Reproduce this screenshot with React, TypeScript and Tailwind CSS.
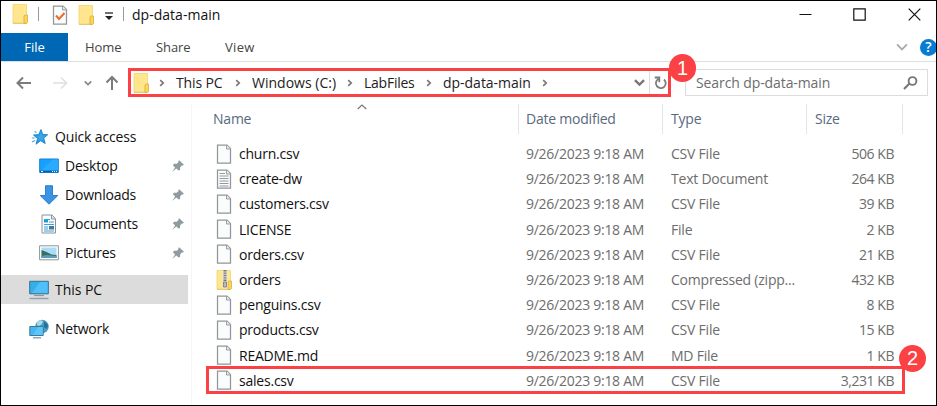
import React from "react";

function Folder({ zip = false }: { zip?: boolean }) {
  return (
    <svg width="17" height="20" viewBox="0 0 17 20" className="shrink-0">
      <path d="M1 .5h13.500v18.500H1z" fill="#ffe794" stroke="#f5d267" strokeWidth=".8" />
      <path d="M2 1.500l10 1.500v16H2z" fill="#ffe58b" />
      <path d="M13 11h2.500v7.500l-1 1H12v-7.500z" fill="#fbd65e" stroke="#d9ad38" strokeWidth=".8" />
      <path d="M1 19.300h13.500" stroke="#dbb44e" strokeWidth=".8" />
      {zip && (
        <g>
          <path d="M6.500 .500h5v18h-5z" fill="#e7e5dc" />
          <path d="M9 0v13" stroke="#777" strokeWidth="3" strokeDasharray="1.400 1" />
          <path d="M7.500 12h3v5h-3z" fill="#bbb" stroke="#777" strokeWidth=".8" />
        </g>
      )}
    </svg>
  );
}

function FileIcon({ kind = "blank" }: { kind?: string }) {
  return (
    <svg width="16" height="20" viewBox="0 0 16 20" className="shrink-0">
      <path d="M1.500 1h9.500l3.500 3.500V19h-13z" fill="#fafcfd" stroke="#929696" strokeWidth="1.250" />
      <path d="M10.500 1v4h4" fill="#e6e9ea" stroke="#929696" strokeWidth=".9" />
      {kind === "text" && <path d="M3.500 4.500H9M3.500 7h9M3.500 9.500h9M3.500 12h9M3.500 14.500h9M3.500 17h9" stroke="#939a9e" strokeWidth="1.100" />}
      {kind === "check" && <path d="M4 10.500l3 3.500L12.500 8" fill="none" stroke="#ee6b27" strokeWidth="2" />}
    </svg>
  );
}

function Chevron({ down = false, color = "#777", size = 8, weight = 1.7 }: { down?: boolean; color?: string; size?: number; weight?: number }) {
  return (
    <svg width={size} height={size} viewBox="0 0 8 8" className="shrink-0">
      <path d={down ? "M.7 2.300L4 5.600l3.300-3.300" : "M2.200 1.200L5.200 4 2.200 6.800"} fill="none" stroke={color} strokeWidth={weight} />
    </svg>
  );
}

function Pin() {
  return (
    <svg width="14" height="14" viewBox="0 0 14 14">
      <path d="M8.200 1.200L13 5.800 11.800 6.600 10.900 6.500 9.200 8.300 9 11 7.600 11.600 5.300 9.500 1.200 13 4.100 8.400 1.900 6.200 3 4.800 5.800 4.800 7.500 3.100 7.400 2z" fill="#8e9ca0" />
    </svg>
  );
}

function PlaceIcon({ name }: { name: string }) {
  switch (name) {
    case "Quick access":
      return (
        <svg width="18" height="18" viewBox="0 0 18 18">
          <path d="M10 1.500l1.700 5 5 .2-4 3.300 1.500 5.500-4.600-2.800-4.500 3.500 1.400-5.700L2.500 7l5.300-.4z" fill="#2d9be0" stroke="#1c80c6" strokeWidth=".9" />
          <path d="M9.800 4l1.200 3.500 3.500.2-3 2.300 1 3.500-3-2-2.500 1.500 1-3-2.500-2h3z" fill="#36a8ea" />
          <path d="M3.500 3.500l2 1M.8 10h3M1 14l3-1.500" stroke="#49a8dc" strokeWidth="1.200" />
        </svg>
      );
    case "Desktop":
      return (
        <svg width="20" height="16" viewBox="0 0 20 16">
          <path d="M.7 1h18.600v13.500H.7z" fill="#17a0ff" stroke="#167fcb" />
          <path d="M14 1.500h5V12H3z" fill="#2aabff" />
          <path d="M1 13.500h18" stroke="#07609f" strokeWidth="1.500" />
          <path d="M2 13.500h2M13 13.500h1M15 13.500h1M17 13.500h1" stroke="#e3f6ff" />
        </svg>
      );
    case "Downloads":
      return (
        <svg width="20" height="20" viewBox="0 0 20 20">
          <path d="M6.500.7h7v9.800h5.300L10 19.200 1.200 10.500h5.300z" fill="#3994e5" stroke="#2678c1" strokeWidth=".9" />
        </svg>
      );
    case "Documents":
      return (
        <svg width="16" height="20" viewBox="0 0 16 20">
          <path d="M1 1h10l3.500 3.500V19H1z" fill="#fcfdfd" stroke="#8b9295" />
          <path d="M10.500 1v4h4" fill="#dce4e8" stroke="#929a9e" />
          <path d="M3 5.500h6M3 8h4M8 8h5M3 10.500h10M3 13h4M3 15h4M3 17h10" stroke="#39a2df" />
          <path d="M3 6h4v2H3z" fill="#1799dd" />
          <path d="M8 12h5v3.500H8z" fill="#4a7795" />
        </svg>
      );
    case "Pictures":
      return (
        <svg width="20" height="16" viewBox="0 0 20 16">
          <path d="M.6.800h18.800v14H.6z" fill="#fff" stroke="#8f9698" />
          <path d="M2.500 2.500h15v10.500h-15z" fill="#a9dcf6" />
          <path d="M2.500 5l5 2 5 2.500 5 .5v3h-15z" fill="#376f67" />
          <path d="M2.500 11l5-1 10 1v2h-15z" fill="#5c9dbc" />
        </svg>
      );
    case "This PC":
      return (
        <svg width="20" height="20" viewBox="0 0 20 20">
          <path d="M.7 1.300h18.600v12.500H.7z" fill="#35afe9" stroke="#35708f" />
          <path d="M11 2h7.600v11H3z" fill="#50bffa" />
          <path d="M5 15.500h10" stroke="#8999a6" strokeWidth="1.200" />
          <path d="M.5 18.500h19" stroke="#8da0b1" strokeWidth="1.400" />
        </svg>
      );
    default:
      return (
        <svg width="20" height="20" viewBox="0 0 20 20">
          <circle cx="13" cy="7.500" r="6.800" fill="#4a9bbe" />
          <path d="M8 3l3-2 3 1-1 3-3 2-2-1z" fill="#a8d8e6" />
          <path d="M15 2l4 4-1 4-3-2z" fill="#286d9b" />
          <path d="M.8 7.500h13.400v9H.8z" fill="#45b7ef" stroke="#38799e" />
          <path d="M9 8h4.700v8H4z" fill="#5cc6f8" />
          <path d="M4 18.800h8" stroke="#7395a9" strokeWidth="1.200" />
        </svg>
      );
  }
}

const files = [
  ["churn.csv", "CSV File", "506 KB"],
  ["create-dw", "Text Document", "264 KB"],
  ["customers.csv", "CSV File", "39 KB"],
  ["LICENSE", "File", "2 KB"],
  ["orders.csv", "CSV File", "21 KB"],
  ["orders", "Compressed (zipp...", "432 KB"],
  ["penguins.csv", "CSV File", "8 KB"],
  ["products.csv", "CSV File", "15 KB"],
  ["README.md", "MD File", "1 KB"],
  ["sales.csv", "CSV File", "3,231 KB"],
];

function TitleBar() {
  return (
    <header className="flex h-8 items-center pr-[15px]">
      <div className="ml-[11px] flex -translate-y-[3px]"><Folder /></div>
      <div className="ml-[9px] h-[14px] w-px -translate-y-[3px] bg-[#999]" />
      <div className="ml-[13px] flex -translate-y-[2px]"><FileIcon kind="check" /></div>
      <div className="ml-[10px] flex -translate-y-[2px]"><Folder /></div>
      <svg width="10" height="9" viewBox="0 0 10 9" className="ml-[9px] -translate-y-[1px]">
        <path d="M1 1h8" stroke="#222" strokeWidth="1.300" /><path d="M1 4h8L5 8z" fill="#222" />
      </svg>
      <div className="ml-[9px] h-[14px] w-px -translate-y-[3px] bg-[#999]" />
      <span className="ml-[8px] -translate-y-[2px] tracking-[0.020px]">dp-data-main</span>
      <div className="ml-auto flex -translate-y-[3px] items-center">
        <svg width="13" height="13" viewBox="0 0 13 13"><path d="M.5 6.500h12" stroke="#111" /></svg>
        <svg width="13" height="13" viewBox="0 0 13 13" className="ml-[41px]"><path d="M.8.800h11.400v11.400H.8z" fill="none" stroke="#111" strokeWidth="1.200" /></svg>
        <svg width="13" height="13" viewBox="0 0 13 13" className="ml-[42px]"><path d="M.7.700l11.600 11.600M12.300.700L.7 12.300" stroke="#111" strokeWidth="1.200" /></svg>
      </div>
    </header>
  );
}

function AddressBar() {
  return (
    <div className="flex h-[43px] items-center border-t border-[#dedede] pb-px text-[#222]">
      <svg width="16" height="14" viewBox="0 0 16 14" className="ml-[15px]">
        <path d="M15 7H2M7 1.500L1.500 7 7 12.500" fill="none" stroke="#7b7b7b" strokeWidth="2" />
      </svg>
      <svg width="16" height="14" viewBox="0 0 16 14" className="ml-5">
        <path d="M1 7h13M9 1.500L14.500 7 9 12.500" fill="none" stroke="#dde1e1" strokeWidth="1.600" />
      </svg>
      <div className="ml-4"><Chevron down color="#888" /></div>
      <svg width="14" height="16" viewBox="0 0 14 16" className="ml-[13px]">
        <path d="M7 15V2M1.500 7.500L7 2l5.500 5.500" fill="none" stroke="#7b7b7b" strokeWidth="2" />
      </svg>
      <div className="relative ml-[9px] flex h-[29px] w-[543px] items-center border-[3px] border-[#fb4143]">
        <div className="ml-[2px]"><Folder /></div>
        <div className="ml-2"><Chevron /></div>
        <span className="ml-[10px] w-[48px] tracking-[-0.150px]">This PC</span>
        <div className="ml-[10px]"><Chevron /></div>
        <span className="ml-[10px] w-[85px] tracking-[0.010px]">Windows (C:)</span>
        <div className="ml-[9px]"><Chevron /></div>
        <span className="ml-[10px] w-[51px] tracking-[-0.250px]">LabFiles</span>
        <div className="ml-[10px]"><Chevron /></div>
        <span className="ml-[10px] w-[89px] tracking-[-0.020px]">dp-data-main</span>
        <div className="ml-[9px]"><Chevron /></div>
        <div className="ml-auto flex h-full items-center">
          <Chevron down color="#777" size={11} />
          <div className="ml-[4px] h-full w-px bg-[#ddd]" />
          <svg width="15" height="16" viewBox="0 0 15 16" className="ml-[3px]">
            <path d="M11 4.500A4.900 4.900 0 1 1 5.300 4M1.800 2.500h4.500v4.700" fill="none" stroke="#7b7b7b" strokeWidth="1.800" />
          </svg>
        </div>
        <span className="absolute -right-[28px] -top-[17px] flex h-[28px] w-[27px] items-center justify-center rounded-full bg-[#fb4143] font-['Liberation_Sans',sans-serif] text-[20px] text-white">1</span>
      </div>
      <div className="ml-[14px] flex h-[27px] w-[243px] items-center border border-[#dcdcdc] pl-[10px] pr-[9px] text-[#6d6d6d]">
        <span className="tracking-[-0.100px]">Search dp-data-main</span>
        <svg width="15" height="14" viewBox="0 0 15 14" className="ml-auto">
          <circle cx="9.500" cy="5" r="3.900" fill="none" stroke="#777" strokeWidth="1.900" />
          <path d="M6.500 7.500L1 13" stroke="#777" strokeWidth="2.200" />
        </svg>
      </div>
    </div>
  );
}

export default function App() {
  return (
    <div className="flex h-[406px] w-[937px] flex-col overflow-hidden border border-black bg-white font-['Open_Sans','Noto_Sans',sans-serif] text-[14px] leading-[18px] tracking-[-0.220px] whitespace-nowrap text-[#111]">
      <TitleBar />
      <nav className="flex h-7 items-center text-[13px] text-[#444] tracking-normal">
        <div className="flex h-7 w-[67px] items-center justify-center bg-[#0067b5] text-white">File</div>
        <span className="ml-[17px] w-[36px] tracking-[-0.100px]">Home</span>
        <span className="ml-[35px] w-[34px] tracking-[-0.100px]">Share</span>
        <span className="ml-[35px] tracking-[0.300px]">View</span>
        <div className="ml-auto"><Chevron down color="#aaa" size={12} weight={1.200} /></div>
        <div className="-mr-px ml-[12px] flex h-[17px] w-[17px] items-center justify-center rounded-full bg-[#087bd4] text-[14px] font-semibold text-white">?</div>
      </nav>
      <AddressBar />
      <div className="flex flex-1">
        <aside className="w-[191px] border-r border-[#f5f5f5] pt-[18px]">
          <div className="mb-px flex h-[29px] items-center pl-[30px]">
            <PlaceIcon name="Quick access" /><span className="ml-[6px] tracking-[-0.150px]">Quick access</span>
          </div>
          {["Desktop", "Downloads", "Documents", "Pictures"].map((p) => (
            <div key={p} className="flex h-[28.8px] items-center pl-[38px]">
              <div className="flex w-5 justify-center"><PlaceIcon name={p} /></div>
              <span className="ml-[6px]">{p}</span>
              <div className="ml-auto mr-[6px]"><Pin /></div>
            </div>
          ))}
          <div className="mt-[8px] flex h-[29px] w-[187px] items-center bg-[#dcdcdc] pl-[28px]">
            <PlaceIcon name="This PC" /><span className="ml-[6px] pt-px tracking-[-0.050px]">This PC</span>
          </div>
          <div className="mt-[10px] flex h-[29px] items-center pl-[28px]">
            <PlaceIcon name="Network" /><span className="ml-[6px] pt-px">Network</span>
          </div>
        </aside>
        <main className="flex-1">
          <div className="relative flex h-[30px] items-center text-[#58697e]">
            <svg width="10" height="6" viewBox="0 0 10 6" className="absolute left-[165px] top-0"><path d="M.7 5L5 1l4.300 4" fill="none" stroke="#777" strokeWidth="1.200" /></svg>
            <div className="flex h-full w-[327px] items-center border-r border-[#e5e5e5] pl-[21px]">Name</div>
            <div className="flex h-full w-[144px] items-center border-r border-[#e5e5e5] pl-[7px]">Date modified</div>
            <div className="flex h-full w-[144px] items-center border-r border-[#e5e5e5] pl-[8px]">Type</div>
            <div className="flex h-full w-[96px] items-center border-r border-[#e5e5e5] pl-[8px]">Size</div>
          </div>
          <div className="pt-[7px]">
            {files.map(([name, type, size]) => (
              <div key={name} className="relative flex h-[25.2px] items-center">
                <div className="ml-[24px] flex w-[17px]">
                  {name === "orders" ? <Folder zip /> : <FileIcon kind={name === "create-dw" ? "text" : "blank"} />}
                </div>
                <span className="ml-[6px] w-[287px] pt-px">{name}</span>
                <span className="w-[145px] pt-px tracking-[-0.270px] text-[#6d6d6d]">9/26/2023 9:18 AM</span>
                <span className="w-[143px] pt-px text-[#6d6d6d]">{type}</span>
                <span className="w-[80px] pt-px text-right tracking-[-0.450px] text-[#6d6d6d]">{size}</span>
                {name === "sales.csv" && (
                  <div className="absolute -top-[2px] left-[14px] h-[28px] w-[699px] border-[3px] border-[#fb4143]">
                    <span className="absolute -right-[24px] -top-[24px] flex h-[27px] w-[27px] items-center justify-center rounded-full bg-[#fb4143] font-['Liberation_Sans',sans-serif] text-[20px] text-white">2</span>
                  </div>
                )}
              </div>
            ))}
          </div>
        </main>
      </div>
    </div>
  );
}
